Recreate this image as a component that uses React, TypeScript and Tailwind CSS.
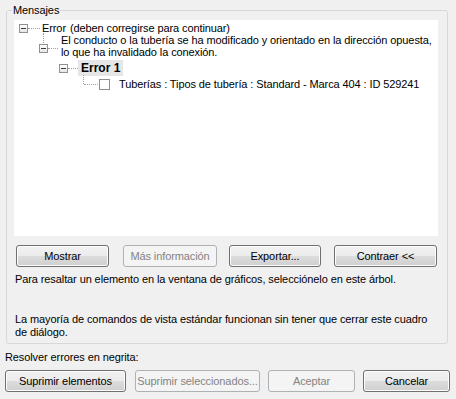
import React from "react";

const font = "font-['Liberation_Sans',Arial,sans-serif]";

function Btn({ children, w, disabled }: { children: React.ReactNode; w: string; disabled?: boolean }) {
  const base = `${w} h-[22px] shrink-0 flex items-center justify-center rounded-[3px] border text-[11px] leading-none whitespace-nowrap`;
  if (disabled)
    return <div className={`${base} border-[#adb2b5] bg-[#f4f4f4] text-[#838383]`}>{children}</div>;
  return (
    <div
      className={`${base} border-[#707070] text-black bg-[linear-gradient(#f2f2f2,#ebebeb_50%,#dddddd_50%,#cfcfcf)] shadow-[inset_0_0_0_1px_#fcfcfc]`}
    >
      {children}
    </div>
  );
}

function Minus({ cls = "" }: { cls?: string }) {
  return (
    <div className={`w-[9px] h-[9px] shrink-0 border border-[#919191] bg-[linear-gradient(#ffffff,#e6e6e6)] flex items-center justify-center ${cls}`}>
      <div className="w-[5px] h-px bg-[#3c3c3c]" />
    </div>
  );
}

function HDots({ w, cls = "" }: { w: string; cls?: string }) {
  return <div className={`${w} h-0 border-t border-dotted border-[#a0a0a0] shrink-0 ${cls}`} />;
}

export default function App() {
  return (
    <div className={`w-[456px] h-[399px] bg-[#f0f0f0] overflow-hidden text-[11px] tracking-[-0.1px] text-black ${font}`}>
      <div className="relative mx-[6px] mt-[10px] h-[334px] w-[442px] rounded-[3px] border border-[#d5d9dc] pt-[8px] pl-[7px] pr-[9px]">
        <div className="absolute left-[5px] top-[-7px] bg-[#f0f0f0] px-[1px] leading-[13px]">Mensajes</div>
        {/* tree */}
        <div className="relative w-[424px] h-[216px] bg-white leading-[13px] whitespace-nowrap">
          {/* row 1 */}
          <div className="relative flex items-center h-[16px] mt-[1px] pl-[5px]">
            <Minus />
            <HDots w="w-[12px]" />
            <span className="ml-[2px]">Error</span>
            <span className="ml-[4px]">(deben corregirse para continuar)</span>
            <div className="absolute left-[29px] top-[13px] h-[12px] border-l border-dotted border-[#a0a0a0]" />
          </div>
          {/* row 2 */}
          <div className="relative flex items-start h-[24px] pl-[25px]">
            <Minus cls="self-center" />
            <HDots w="w-[10px]" cls="self-center" />
            <div className="ml-[3px] mt-[-2px] leading-[12px]">
              El conducto o la tubería se ha modificado y orientado en la dirección opuesta,
              <br />
              lo que ha invalidado la conexión.
            </div>
          </div>
          {/* row 3 */}
          <div className="relative flex items-center h-[16px] pl-[45px]">
            <Minus />
            <HDots w="w-[10px]" />
            <span className="h-[16px] px-[3px] flex items-center bg-[#e6e6e6] font-bold text-[12px] tracking-normal">Error 1</span>
            <div className="absolute left-[69px] top-[15px] h-[9px] border-l border-dotted border-[#a0a0a0]" />
          </div>
          {/* row 4 */}
          <div className="relative flex items-center h-[16px] pl-[69px]">
            <div className="w-[1px]" />
            <HDots w="w-[14px]" />
            <div className="w-[11px] h-[11px] border border-[#8f8f8f] bg-white shrink-0 ml-[1px]" />
            <span className="ml-[9px]">Tuberías : Tipos de tubería : Standard - Marca 404 : ID 529241</span>
          </div>
        </div>
        {/* buttons */}
        <div className="flex mt-[9px] pl-[2px]">
          <Btn w="w-[93px]">Mostrar</Btn>
          <div className="w-[14px]" />
          <Btn w="w-[94px]" disabled>Más información</Btn>
          <div className="w-[12px]" />
          <Btn w="w-[92px]">Exportar...</Btn>
          <div className="w-[13px]" />
          <Btn w="w-[103px]">Contraer &lt;&lt;</Btn>
        </div>
        <div className="mt-[6px] pl-[1px] leading-[13px] whitespace-nowrap">
          Para resaltar un elemento en la ventana de gráficos, selecciónelo en este árbol.
        </div>
        <div className="mt-[27px] pl-[1px] leading-[13px] whitespace-nowrap">
          La mayoría de comandos de vista estándar funcionan sin tener que cerrar este cuadro
          <br />
          de diálogo.
        </div>
      </div>
      <div className="mt-[7px] pl-[5px] leading-[13px]">Resolver errores en negrita:</div>
      <div className="flex mt-[6px] pl-[5px]">
        <Btn w="w-[121px]">Suprimir elementos</Btn>
        <div className="w-[9px]" />
        <Btn w="w-[125px]" disabled>Suprimir seleccionados...</Btn>
        <div className="w-[8px]" />
        <Btn w="w-[87px]" disabled>Aceptar</Btn>
        <div className="w-[8px]" />
        <Btn w="w-[87px]">Cancelar</Btn>
      </div>
    </div>
  );
}
